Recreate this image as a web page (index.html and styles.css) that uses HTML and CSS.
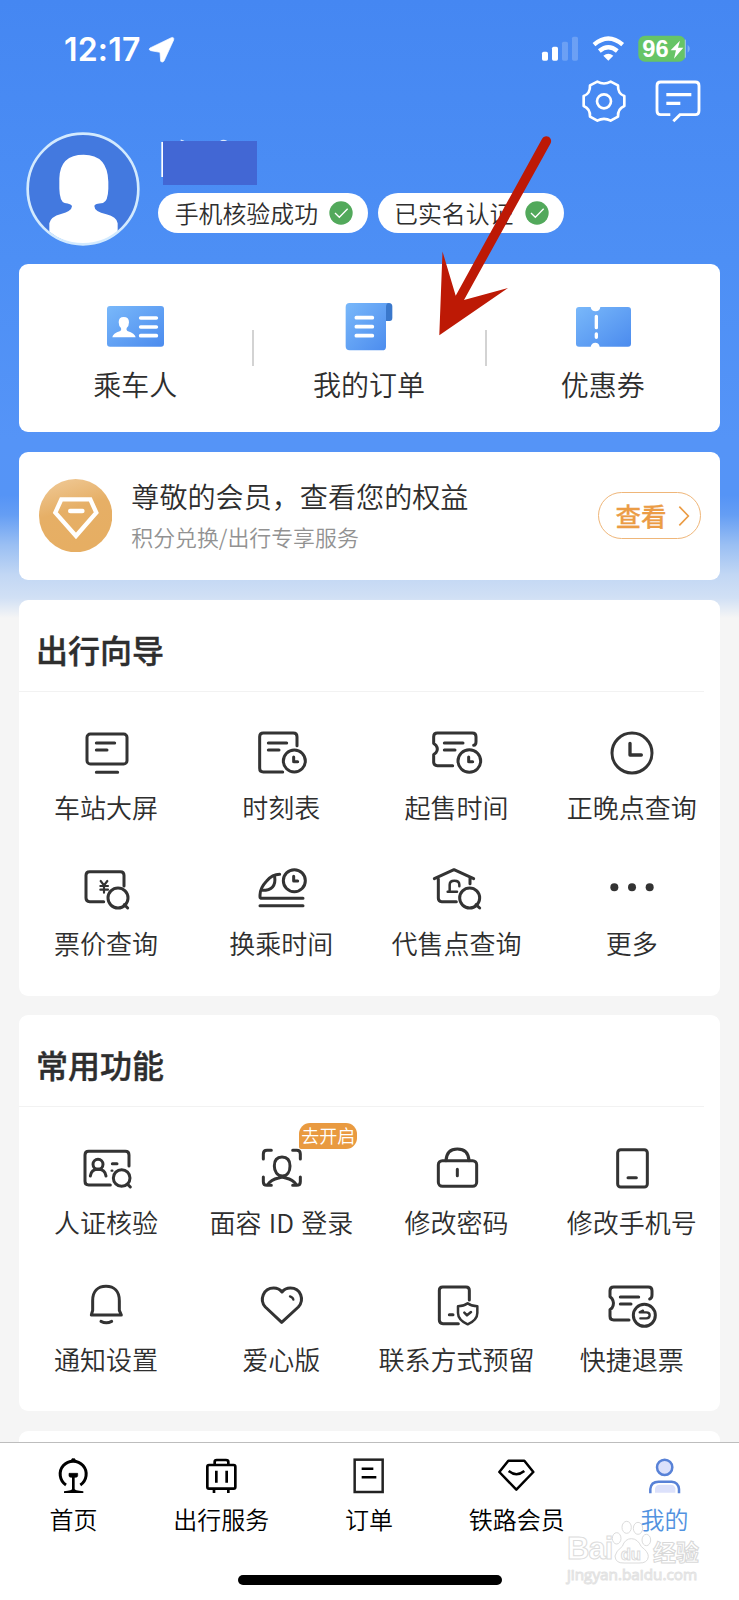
FILE: index.html
```html
<!DOCTYPE html>
<html lang="zh-CN">
<head>
<meta charset="utf-8">
<title>我的</title>
<link rel="stylesheet" href="styles.css">
</head>
<body>
<div class="screen">
  <header class="status">
    <div class="status-left">
      <span class="time">12:17</span>
      <svg class="loc" viewBox="444 107 84 84"><path d="M450 143L514 112Q523 109 521 119L492 182Q487 188 482 183L480 156L452 151Q444 148 450 143Z" fill="#fff" stroke="#fff" stroke-width="2"/></svg>
    </div>
    <div class="status-right">
      <svg class="status-icons" viewBox="510 100 460 92">
        <g fill="#fff"><rect x="516" y="156" width="18" height="27" rx="5"/><rect x="546" y="141" width="18" height="42" rx="5"/><g opacity=".2"><rect x="576" y="126" width="18" height="57" rx="5"/><rect x="606" y="111" width="18" height="72" rx="5"/></g></g>
        <g fill="none" stroke="#fff" stroke-width="13"><path d="M672 135Q715 98 758 135"/><path d="M688 154Q715 132 742 154"/></g>
        <path d="M700 168Q715 156 730 168L715 183Z" fill="#fff"/>
        <rect x="805" y="108" width="142" height="78" rx="20" fill="#66c466"/>
        <path d="M946 120V174" stroke="#a5c9f0" stroke-width="3"/>
        <path d="M953 135Q966 147 953 159Z" fill="#7fb0f7"/>
        <text class="battery" x="817" y="173">96</text>
        <path d="M930 123L902 152H918L912 177L940 144H924Z" fill="#fff"/>
      </svg>
    </div>
  </header>

  <div class="tools">
    <svg class="tool" viewBox="632 235 144 138" fill="none" stroke="#fff" stroke-width="8" stroke-linejoin="round"><path d="M684 246Q704 257 724 246L746 257Q745 282 765 289V319Q745 327 746 351L724 363Q704 352 684 363L662 351Q663 327 643 319V289Q663 282 662 257Z"/><circle cx="704" cy="305" r="21"/></svg>
    <svg class="tool" viewBox="856 235 144 138" fill="none" stroke="#fff" stroke-width="8.5"><path d="M905 345H876Q865 345 865 333V258Q865 247 876 247H980Q991 247 991 258V333Q991 345 980 345H934L914 365"/><path d="M893 285H968M893 311H935" stroke-width="10"/></svg>
  </div>

  <section class="profile">
    <svg class="avatar" viewBox="77 396 342 342"><circle cx="248" cy="567" r="166" fill="#4379df"/><path d="M147 695V670Q151 650 182 642Q214 634 215 619Q213 611 193 609Q178 604 177 566V535Q179 464 250 464Q322 464 324 545V566Q323 603 308 609Q282 611 282 618Q282 635 318 643Q349 650 352 670V695Q308 732 250 732Q192 732 147 695Z" fill="#fff"/><circle cx="248" cy="567" r="166" fill="none" stroke="#d3eafe" stroke-width="8"/></svg>
    <div class="who">
      <svg class="name" viewBox="480 417 294 141"><path d="M487 426V531" stroke="#fff" stroke-width="6"/><path d="M542 420L552 424M662 424Q670 419 680 424" stroke="#dce9fd" stroke-width="4" fill="none"/><rect x="489" y="423" width="282" height="132" fill="#4267d4"/></svg>
      <div class="pills">
        <span class="pill">手机核验成功<svg class="ok" viewBox="0 0 72 72"><circle cx="36" cy="36" r="35" fill="#52a95b"/><path d="M18 36L31 49L56 23" fill="none" stroke="#fff" stroke-width="4"/></svg></span>
        <span class="pill">已实名认证<svg class="ok" viewBox="0 0 72 72"><circle cx="36" cy="36" r="35" fill="#52a95b"/><path d="M18 36L31 49L56 23" fill="none" stroke="#fff" stroke-width="4"/></svg></span>
      </div>
    </div>
  </section>

  <svg class="defs" width="0" height="0"><defs><linearGradient id="b" x1="0" y1="0" x2="1" y2="1"><stop offset="0" stop-color="#79b8fa"/><stop offset="1" stop-color="#4b8bee"/></linearGradient><linearGradient id="o" x1="0" y1="0" x2=".3" y2="1"><stop offset="0" stop-color="#f0cb9a"/><stop offset=".5" stop-color="#e6af66"/><stop offset="1" stop-color="#e6ae63"/></linearGradient></defs></svg>

  <section class="card quick">
    <div class="quick-item">
      <svg class="icon" viewBox="318 111 180 180"><rect x="321" y="138" width="171" height="122" rx="9" fill="url(#b)"/><path d="M337 232Q338 220 361 213Q365 210 363 204Q356 198 356 187Q356 171 371 171Q387 171 387 187Q387 198 380 204Q378 210 382 213Q405 220 407 232Z" fill="#fff"/><path d="M422 174H469M422 201H469M422 227H469" stroke="#fff" stroke-width="11" stroke-linecap="round"/></svg>
      <span>乘车人</span>
    </div>
    <div class="quick-item">
      <svg class="icon" viewBox="1018 111 180 180"><path d="M1158 129H1168Q1178 129 1178 140V174Q1178 183 1170 183H1158Z" fill="#3a78cc"/><path d="M1050 129H1168Q1159 130 1159 140V260Q1159 271 1148 271H1050Q1038 271 1038 259V141Q1038 129 1050 129Z" fill="url(#b)"/><path d="M1070 173H1118M1070 200H1118M1070 227H1118" stroke="#fff" stroke-width="11" stroke-linecap="round"/></svg>
      <span>我的订单</span>
    </div>
    <div class="quick-item">
      <svg class="icon" viewBox="612 111 180 180"><path d="M630 141H665Q667 154 680 154Q692 154 694 141H777Q786 141 786 150V251Q786 260 777 260H692Q690 248 679 248Q668 248 665 260H630Q621 260 621 251V150Q621 141 630 141Z" fill="url(#b)"/><path d="M682 169V203M682 222V232" stroke="#fff" stroke-width="10" stroke-linecap="round"/></svg>
      <span>优惠券</span>
    </div>
  </section>

  <section class="card member">
    <svg class="medal" viewBox="117 660 220 220"><circle cx="227" cy="770" r="110" fill="url(#o)"/><path d="M184 721H271L289 761L228 831L166 761Z" fill="none" stroke="#fff" stroke-width="13"/><path d="M211 756H247" stroke="#fff" stroke-width="14" stroke-linecap="round"/></svg>
    <div class="member-text"><div class="member-title">尊敬的会员，查看您的权益</div><div class="member-sub">积分兑换/出行专享服务</div></div>
    <div class="view"><span>查看</span><svg class="chev" viewBox="0 0 36 66"><path d="M4 5L31 33L4 61" fill="none" stroke="#eb9c45" stroke-width="5"/></svg></div>
  </section>

  <section class="card group">
    <h2>出行向导</h2>
    <div class="grid">
      <div class="item"><svg class="icon line" viewBox="232 399 180 180"><rect x="262" y="432" width="120" height="90" rx="10"/><path d="M290 459H345M290 480H322M290 547H354"/></svg><span>车站大屏</span></div>
      <div class="item"><svg class="icon line" viewBox="756 399 180 180"><path d="M891 467V440Q891 429 880 429H790Q779 429 779 440V535Q779 546 790 546H848M805 459H860M805 480H837"/><circle cx="883" cy="513" r="33"/><path d="M881 501V515H893"/></svg><span>时刻表</span></div>
      <div class="item"><svg class="icon line" viewBox="174 399 180 180"><path d="M314 466Q321 465 321 455V440Q321 429 310 429H205Q194 429 194 440V460L201 466Q209 477 201 488L194 494V516Q194 527 205 527H251M226 459H282M226 480H258"/><circle cx="301" cy="513" r="34"/><path d="M299 501V515H311"/></svg><span>起售时间</span></div>
      <div class="item"><svg class="icon line" viewBox="698 399 180 180"><circle cx="788" cy="489" r="60"/><path d="M782 460V495H816" stroke-width="10"/></svg><span>正晚点查询</span></div>
      <div class="item"><svg class="icon line" viewBox="232 808 180 180"><path d="M373 889V857Q373 846 362 846H270Q259 846 259 857V925Q259 936 270 936H312"/><path d="M303 874L313 887L323 874M313 887V909M302 889H325M302 900H325" stroke-width="6.5"/><circle cx="355" cy="925" r="30"/><path d="M374 945L384 955"/></svg><span>票价查询</span></div>
      <div class="item"><svg class="icon line" viewBox="756 808 180 180"><path d="M839 854Q817 854 800 874Q780 895 780 916V922Q780 926 786 926H909M780 948H909M824 861Q830 902 787 902"/><circle cx="883" cy="873" r="33"/><path d="M881 860V874H893"/></svg><span>换乘时间</span></div>
      <div class="item"><svg class="icon line" viewBox="174 808 180 180"><path d="M196 867L255 840L314 867M208 868V926Q208 936 218 936H262M303 866V882"/><path d="M236 906H264M242 904V885Q242 873 256 873Q271 873 271 885V890" stroke-width="7.5"/><circle cx="302" cy="925" r="30"/><path d="M321 945L332 955"/></svg><span>代售点查询</span></div>
      <div class="item"><svg class="icon" viewBox="698 808 180 180" fill="#333"><circle cx="735" cy="893" r="12"/><circle cx="788" cy="893" r="12"/><circle cx="841" cy="893" r="12"/></svg><span>更多</span></div>
    </div>
  </section>

  <section class="card group second">
    <h2>常用功能</h2>
    <div class="grid">
      <div class="item"><svg class="icon line" viewBox="232 386 180 180"><path d="M388 470V437Q388 426 377 426H267Q256 426 256 437V516Q256 527 267 527H332"/><circle cx="295" cy="465" r="15"/><path d="M272 500Q275 480 295 480Q316 480 319 500M338 463H352"/><path d="M336 484H338" stroke-width="7"/><circle cx="366" cy="506" r="25"/><path d="M384 525L392 533"/></svg><span>人证核验</span></div>
      <div class="item"><svg class="icon line" viewBox="756 386 180 180"><path d="M790 449V434Q790 423 801 423H814M878 423H890Q901 423 901 434V449M790 503V517Q790 528 801 528H814M878 528H890Q901 528 901 517V503"/><path d="M846 443C829 443 823 455 823 470C823 487 832 500 847 500C862 500 870 487 870 470C870 455 864 443 846 443ZM804 525Q812 511 836 506Q846 502 857 506Q880 511 888 525"/></svg><span class="spaced">面容 ID 登录</span><b class="badge">去开启</b></div>
      <div class="item"><svg class="icon line" viewBox="174 386 180 180"><rect x="208" y="454" width="115" height="77" rx="12"/><path d="M231 454Q233 419 265 419Q298 419 300 454M265 480V499"/></svg><span>修改密码</span></div>
      <div class="item"><svg class="icon line" viewBox="698 386 180 180"><rect x="745" y="421" width="89" height="112" rx="9"/><path d="M776 505H801"/></svg><span>修改手机号</span></div>
      <div class="item"><svg class="icon line" viewBox="232 795 180 180"><path d="M275 915H365L359 901V872C359 845 344 829 319 829C294 829 279 845 279 872V901ZM304 934Q320 942 336 934"/></svg><span>通知设置</span></div>
      <div class="item"><svg class="icon line" viewBox="756 795 180 180"><path d="M845 937L796 891C777 870 790 834 821 834Q837 834 846 846Q855 834 871 834C903 834 914 870 895 891Z"/><path d="M870 859Q879 862 880 869" stroke-width="7"/></svg><span>爱心版</span></div>
      <div class="item"><svg class="icon line" viewBox="174 795 180 180"><path d="M301 870V841Q301 831 291 831H221Q211 831 211 841V930Q211 941 222 941H268M241 914H252"/><path d="M296 880Q308 889 325 889V909Q325 930 296 943Q267 930 267 909V889Q284 889 296 880ZM286 908L294 916L306 906" stroke-width="7.5"/></svg><span>联系方式预留</span></div>
      <div class="item"><svg class="icon line" viewBox="698 795 180 180"><path d="M841 867Q848 865 848 855V842Q848 831 837 831H733Q722 831 722 842V860L728 866Q737 880 728 894L722 899V919Q722 930 733 930H779M753 861H808M753 882H785"/><circle cx="825" cy="916" r="33"/><path d="M811 907H831Q841 907 841 916Q841 925 831 925H813M811 907L821 902" stroke-width="7"/></svg><span>快捷退票</span></div>
    </div>
  </section>
  <section class="card next"></section>

  <nav class="tabs">
    <div class="tab"><svg class="tab-icon" viewBox="162 92 120 120" fill="none" stroke="#000" stroke-width="8"><path d="M198 179A39 39 0 1 1 241 179" stroke-width="9"/><path d="M213 107L216 100H224L228 107M207 144H233V151Q233 156 226 156H214Q207 156 207 151Z" fill="#000" stroke-width="2"/><path d="M220 154V200"/><path d="M192 203V198Q216 196 220 188Q224 196 250 198V203Z" fill="#000" stroke="none"/></svg><span>首页</span></div>
    <div class="tab"><svg class="tab-icon" viewBox="605 92 120 120" fill="none" stroke="#000" stroke-width="8"><rect x="621" y="119" width="84" height="71" rx="5"/><path d="M643 118V109Q643 104 649 104H677Q684 104 684 109V118M648 136V172M679 136V172M641 191V203M684 191V203"/></svg><span>出行服务</span></div>
    <div class="tab"><svg class="tab-icon" viewBox="1048 92 120 120" fill="none" stroke="#222" stroke-width="7.5"><rect x="1065" y="103" width="84" height="97"/><path d="M1086 130H1121M1086 156H1130" stroke="#000"/></svg><span>订单</span></div>
    <div class="tab"><svg class="tab-icon" viewBox="385 92 120 120" fill="none" stroke="#000" stroke-width="7.5" stroke-linejoin="round"><path d="M419 106H467L494 140L443 193L392 140Z"/><path d="M420 137Q443 156 467 137"/></svg><span>铁路会员</span></div>
    <div class="tab active"><svg class="tab-icon" viewBox="828 92 120 120" fill="none" stroke="#5882d7" stroke-width="7.5"><circle cx="887" cy="126" r="23" fill="#dce1fb"/><path d="M858 202V189Q860 179 872 178H906Q917 179 919 189V202Z" fill="#dce1fb" stroke="none"/><path d="M844 204V191Q846 169 869 169H908Q928 171 930 191V204"/></svg><span>我的</span></div>
  </nav>
  <div class="home-bar"></div>

  <div class="watermark">
    <div class="wm-top"><span class="wm-bai">Bai</span><svg class="wm-paw" viewBox="726 282 126 132"><g fill="#fff" stroke="#dcdcdc" stroke-width="3"><ellipse cx="743" cy="337" rx="13" ry="17"/><ellipse cx="773" cy="304" rx="14" ry="18"/><ellipse cx="807" cy="307" rx="14" ry="18"/><ellipse cx="832" cy="342" rx="13" ry="17"/><path d="M738 390Q740 376 760 361Q768 338 787 338Q806 338 817 362Q838 377 838 392Q836 412 810 411H765Q739 412 738 390Z"/></g><text class="wm-du" x="755" y="402">du</text></svg><span class="wm-jy">经验</span></div>
    <div class="wm-url">jingyan.baidu.com</div>
  </div>

  <svg class="pointer" viewBox="430 130 90 212"><path d="M542.1 138.7A4.8 4.8 0 0 1 550.5 143.4L464 300L508 288L439.3 335.3L442.5 251.5L455.7 295.7Z" fill="#bd1905"/></svg>
</div>
</body>
</html>
```

FILE: styles.css
```css
* { box-sizing: border-box; }
body { margin: 0; font-family: "Noto Sans CJK SC", sans-serif; color: #2e2e2e; font-weight: 350; }
svg { display: block; flex: none; }
.screen {
  position: relative; width: 739px; height: 1600px; overflow: hidden;
  display: flex; flex-direction: column;
  background: linear-gradient(#4587f2 0, #4d8ff5 260px, #5594f7 440px, #5594f6 495px, #659ef4 515px, #9abff3 545px, #c2d7f4 575px, #d1e0f5 598px, #f5f5f5 618px);
}
.defs { position: absolute; }
.status { display: flex; justify-content: space-between; height: 78px; padding: 32px 46px 0 64px; }
.status-left { display: flex; align-items: flex-start; gap: 7px; }
.time { width: 77px; font: 600 32px/36px Inter, sans-serif; color: #fff; letter-spacing: .2px; white-space: nowrap; }
.loc { width: 28px; height: 28px; margin-top: 4px; }
.status-icons { width: 153.3px; height: 30.7px; margin: 1px 0 0 0; }
.battery { font: 700 71px "Liberation Sans", sans-serif; fill: #fff; }
.tools { display: flex; justify-content: flex-end; gap: 26.7px; height: 46px; padding-right: 36.7px; }
.tool { width: 48px; height: 46px; }
.profile { display: flex; height: 140px; padding: 8px 0 0 25.7px; }
.avatar { width: 114px; height: 114px; }
.who { padding: 7px 0 0 18.5px; }
.name { width: 98px; height: 47px; margin-left: 1.8px; }
.pills { display: flex; gap: 9.5px; margin-top: 7px; }
.pill { display: flex; align-items: center; gap: 11px; height: 40px; padding: 0 15px 1px 16.5px; border-radius: 20px; background: #fff; font-size: 23.9px; line-height: 36px; white-space: nowrap; }
.pill .ok { width: 24px; height: 24px; margin-top: 1px; }
.card { flex: none; width: 701px; margin-left: 19px; border-radius: 9px; background: #fff; }
.icon { width: 60px; height: 60px; }
.quick { display: grid; grid-template-columns: repeat(3, 1fr); height: 168px; }
.quick-item { position: relative; display: flex; flex-direction: column; align-items: center; padding-top: 33px; font-size: 28px; line-height: 30px; }
.quick-item span { margin-top: 12px; margin-left: -1px; }
.quick-item + .quick-item::before { content: ""; position: absolute; left: -1px; top: 66px; width: 2px; height: 36px; background: #d3d3d3; }
.member { display: flex; align-items: center; height: 128.5px; margin-top: 19.5px; padding: 0 19.5px 0 20px; }
.medal { width: 73.3px; height: 73.3px; }
.member-text { flex: 1; padding-left: 19px; }
.member-title { font-size: 28.1px; line-height: 40px; margin-top: -2px; }
.member-sub { font-size: 21.9px; line-height: 34px; margin-top: 4px; color: #929292; }
.view { display: flex; align-items: center; gap: 11px; width: 103px; height: 47px; padding-left: 17px; border: 1.5px solid #efb679; border-radius: 24px; color: #eb9c45; font-size: 25.5px; font-weight: 500; line-height: 40px; -webkit-text-stroke: .3px; }
.view span { margin-top: -1px; }
.chev { width: 12px; height: 22px; }
.group { height: 396px; margin-top: 19.5px; }
h2 { height: 92px; margin: 0 16px 0 0; padding: 24px 0 0 17px; font-size: 32px; font-weight: 500; line-height: 50px; border-bottom: 1px solid #f2f2f2; -webkit-text-stroke: .4px; }
.grid { display: grid; grid-template-columns: repeat(4, 1fr); grid-auto-rows: 136.5px; padding-top: 31px; }
.item { position: relative; display: flex; flex-direction: column; align-items: center; font-size: 26px; line-height: 30px; white-space: nowrap; }
.item span { margin-top: 9px; margin-left: -1px; }
.item .spaced { word-spacing: 1.5px; }
.line { fill: none; stroke: #333; stroke-width: 9; stroke-linecap: round; stroke-linejoin: round; }
.badge { position: absolute; left: 105px; top: -15px; width: 58px; height: 26px; border-radius: 11px 11px 11px 2px; background: #e99a40; color: #fff; font-size: 18px; font-weight: 350; line-height: 25px; text-align: center; }
.next { height: 11px; margin-top: 19.5px; border-radius: 9px 9px 0 0; }
.tabs { position: absolute; left: 0; right: 0; bottom: 0; height: 158px; display: grid; grid-template-columns: repeat(5, 1fr); background: #fff; border-top: 1px solid #bdbdbd; }
.tab { display: flex; flex-direction: column; align-items: center; padding-top: 13px; color: #000; font-size: 24px; line-height: 30px; }
.tab-icon { width: 40px; height: 40px; }
.tab span { margin-top: 8px; margin-left: -1px; }
.tab.active { color: #5292e0; }
.home-bar { position: absolute; left: 238px; bottom: 15px; width: 264px; height: 10px; border-radius: 5px; background: #000; }
.watermark { position: absolute; left: 567px; top: 1519px; width: 132px; }
.wm-top { display: flex; align-items: flex-end; height: 45px; }
.wm-bai { font: 700 31px/30px "Liberation Sans", sans-serif; width: 44px; color: #fff; -webkit-text-stroke: 1px #dcdcdc; letter-spacing: -1px; }
.wm-paw { width: 42px; height: 44px; }
.wm-du { font: 700 50px "Liberation Sans", sans-serif; fill: #fff; stroke: #dcdcdc; stroke-width: 3px; }
.wm-jy { font-size: 23px; line-height: 26px; font-weight: 700; color: #fff; -webkit-text-stroke: 1px #d8d8d8; }
.wm-url { font: 400 15.3px/20px "Open Sans", sans-serif; color: #fff; -webkit-text-stroke: 1px #e2e2e2; }
.pointer { position: absolute; left: 430px; top: 130px; width: 90px; height: 212px; overflow: visible; }
```
